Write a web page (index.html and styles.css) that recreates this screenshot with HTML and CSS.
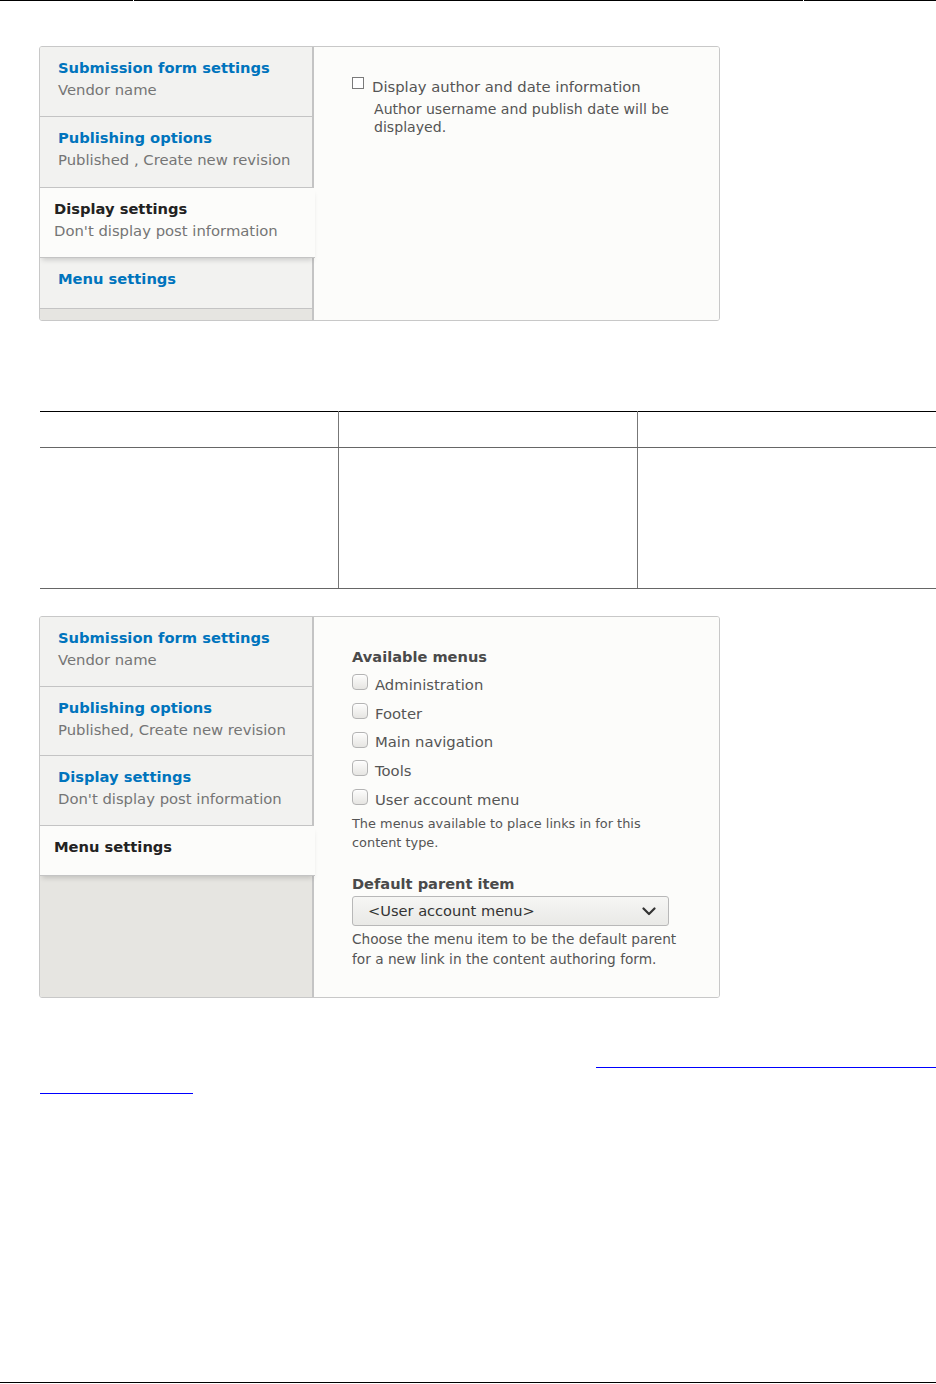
FILE: index.html
```html
<!DOCTYPE html>
<html lang="en">
<head>
<meta charset="utf-8">
<title>Vertical tabs</title>
<link rel="stylesheet" href="styles.css">
</head>
<body>
<div class="topline"><span class="seg seg-a"></span><span class="seg seg-b"></span><span class="seg seg-c"></span></div>

<div class="vtabs vtabs-1">
  <ul class="vmenu">
    <li class="vitem"><a class="vtitle">Submission form settings</a><span class="vsum">Vendor name</span></li>
    <li class="vitem"><a class="vtitle">Publishing options</a><span class="vsum">Published , Create new revision</span></li>
    <li class="vitem selected"><a class="vtitle">Display settings</a><span class="vsum">Don't display post information</span></li>
    <li class="vitem nosum"><a class="vtitle">Menu settings</a></li>
  </ul>
  <div class="vpane pane-1">
    <div class="simple-check">
      <span class="plainbox"></span>
      <span class="label-1">Display author and date information</span>
    </div>
    <div class="desc-1">Author username and publish date will be<br>displayed.</div>
  </div>
</div>

<table class="grid">
  <tr class="head"><td></td><td></td><td></td></tr>
  <tr class="body"><td></td><td></td><td></td></tr>
</table>

<div class="vtabs vtabs-2">
  <ul class="vmenu">
    <li class="vitem"><a class="vtitle">Submission form settings</a><span class="vsum">Vendor name</span></li>
    <li class="vitem"><a class="vtitle">Publishing options</a><span class="vsum">Published, Create new revision</span></li>
    <li class="vitem"><a class="vtitle">Display settings</a><span class="vsum">Don't display post information</span></li>
    <li class="vitem selected nosum"><a class="vtitle">Menu settings</a></li>
  </ul>
  <div class="vpane pane-2">
    <div class="flabel">Available menus</div>
    <div class="checks">
      <div class="check"><span class="cbox"></span><span>Administration</span></div>
      <div class="check"><span class="cbox"></span><span>Footer</span></div>
      <div class="check"><span class="cbox"></span><span>Main navigation</span></div>
      <div class="check"><span class="cbox"></span><span>Tools</span></div>
      <div class="check"><span class="cbox"></span><span>User account menu</span></div>
    </div>
    <div class="desc-small">The menus available to place links in for this<br>content type.</div>
    <div class="flabel flabel-2">Default parent item</div>
    <div class="select">
      <span class="select-text">&lt;User account menu&gt;</span>
      <svg class="chev" width="14" height="9" viewBox="0 0 14 9"><polyline points="1.5,1.5 7,7 12.5,1.5" fill="none" stroke="#333" stroke-width="2.2" stroke-linecap="round" stroke-linejoin="round"/></svg>
    </div>
    <div class="desc-2">Choose the menu item to be the default parent<br>for a new link in the content authoring form.</div>
  </div>
</div>

<div class="links">
  <div class="lrow lrow-1"><span class="uline uline-1"></span></div>
  <div class="lrow"><span class="uline uline-2"></span></div>
</div>

<div class="bottomline"></div>
</body>
</html>
```

FILE: styles.css
```css
html, body {
  margin: 0;
  padding: 0;
  height: 1384px;
  overflow: hidden;
  background: #fff;
}

body {
  display: flex;
  flex-direction: column;
  font-family: "DejaVu Sans", Verdana, sans-serif;
  font-size: 14.8px;
  color: #333;
}

.topline {
  display: flex;
  gap: 1px;
  height: 1px;
  flex: none;
}

.seg {
  display: block;
  height: 1px;
  background: #000;
}

.seg-a { width: 133px; }
.seg-b { width: 669px; }
.seg-c { flex: 1; }

/* vertical tabs */
.vtabs {
  flex: none;
  display: flex;
  width: 681px;
  margin-left: 39px;
  box-sizing: border-box;
  border: 1px solid #c8c8c8;
  border-radius: 3px;
  background: #fcfcfa;
  overflow: hidden;
}

.vtabs-1 {
  margin-top: 45px;
  height: 275px;
}

.vtabs-2 {
  margin-top: 27px;
  height: 382px;
}

.vmenu {
  list-style: none;
  margin: 0;
  padding: 0;
  width: 272px;
  flex: none;
  background: #e6e5e1;
  border-right: 2px solid #c4c4c4;
}

.vitem {
  display: block;
  padding: 10px 10px 15.4px 18px;
  background: #f2f2f0;
  border-bottom: 1px solid #c4c4c4;
  line-height: 22px;
}

.vtabs-2 .vitem {
  padding-bottom: 14.5px;
}

.vitem.nosum,
.vtabs-2 .vitem.nosum {
  padding-bottom: 17.5px;
}

.vtitle {
  display: block;
  font-weight: bold;
  font-size: 14.7px;
  color: #0074bd;
  text-decoration: none;
}

.vsum {
  display: block;
  color: #757575;
  white-space: nowrap;
}

.vitem.selected {
  position: relative;
  z-index: 1;
  margin-right: -3px;
  padding-left: 14px;
  background: #fcfcfa;
  box-shadow: 0 4px 5px -2px rgba(0, 0, 0, 0.16);
}

.vitem.selected .vtitle {
  color: #222;
}

.vpane {
  flex: 1;
  background: #fcfcfa;
}

/* pane 1 */
.pane-1 {
  padding: 30px 0 0 38px;
}

.simple-check {
  display: flex;
  align-items: flex-start;
  line-height: 20px;
  color: #555;
}

.plainbox {
  flex: none;
  width: 10px;
  height: 10px;
  margin-top: 0;
  margin-right: 8px;
  border: 1px solid #7a7a7a;
  background: #fff;
}

.label-1 {
  display: block;
}

.desc-1 {
  margin-left: 22px;
  margin-top: 3px;
  font-size: 14.1px;
  line-height: 18.4px;
  color: #555;
}

/* pane 2 */
.pane-2 {
  padding: 30px 0 0 38px;
}

.flabel {
  font-weight: bold;
  font-size: 14.6px;
  line-height: 20px;
  color: #4a4a4a;
}

.flabel-2 {
  margin-top: 22px;
}

.checks {
  margin-top: 3px;
}

.check {
  display: flex;
  align-items: center;
  height: 28.7px;
  color: #555;
}

.cbox {
  flex: none;
  width: 14px;
  height: 14px;
  margin-right: 7px;
  margin-top: -4px;
  border: 1px solid #b4b4b4;
  border-radius: 4px;
  background: linear-gradient(#fdfdfc, #e6e5e2);
  box-shadow: inset 0 1px 1px rgba(255, 255, 255, 0.8);
}

.desc-small {
  margin-top: 1px;
  font-size: 12.9px;
  line-height: 19px;
  color: #555;
}

.select {
  display: flex;
  align-items: center;
  justify-content: space-between;
  box-sizing: border-box;
  width: 317px;
  height: 30px;
  margin-top: 2px;
  padding: 0 12px 0 15px;
  border: 1px solid #b8b8b8;
  border-radius: 3px;
  background: linear-gradient(#f6f6f4, #e9e9e6);
  color: #333;
  font-size: 14.6px;
  line-height: 20px;
}

.chev {
  display: block;
}

.desc-2 {
  margin-top: 3px;
  font-size: 13.7px;
  line-height: 20px;
  color: #555;
}

/* table */
.grid {
  flex: none;
  margin: 90px 0 0 40px;
  width: 896px;
  border-collapse: collapse;
  table-layout: fixed;
  border-top: 1px solid #000;
}

.grid td {
  padding: 0;
  border-left: 1px solid #777;
}

.grid td:first-child {
  border-left: none;
}

.grid .head td {
  height: 35px;
  border-bottom: 1px solid #666;
}

.grid .body td {
  height: 140px;
  border-bottom: 1px solid #666;
}

/* links */
.links {
  flex: none;
  margin-top: 44px;
  padding-left: 40px;
}

.lrow {
  display: flex;
  height: 26px;
}

.lrow-1 {
  justify-content: flex-end;
}

.uline {
  display: block;
  box-sizing: border-box;
  height: 26px;
  border-bottom: 1px solid #0000ff;
}

.uline-1 { width: 340px; }
.uline-2 { width: 153px; }

.bottomline {
  flex: none;
  margin-top: auto;
  margin-bottom: 1px;
  height: 1px;
  background: #000;
}
```
